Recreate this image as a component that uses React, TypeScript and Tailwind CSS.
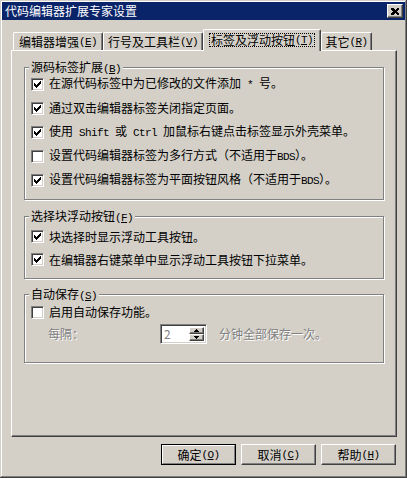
import React from 'react';

const raised =
  'border border-t-white border-l-white border-r-[#404040] border-b-[#404040] shadow-[inset_-1px_-1px_0_#808080]';
const sunken =
  'border border-t-[#808080] border-l-[#808080] border-r-white border-b-white shadow-[inset_1px_1px_0_#404040,inset_-1px_-1px_0_#d4d0c8]';
const disabled = 'text-[#808080] [text-shadow:1px_1px_0_#fff]';

function A({ children }: { children: React.ReactNode }) {
  return <span className="font-['Liberation_Mono',monospace] text-[11px] tracking-[-0.6px]">{children}</span>;
}

function Key({ k }: { k: string }) {
  return (
    <A>
      (<span className="underline underline-offset-[1px]">{k}</span>)
    </A>
  );
}

function CheckBox({ checked }: { checked?: boolean }) {
  return (
    <span className={`flex items-center justify-center w-[13px] h-[13px] shrink-0 bg-white ${sunken}`}>
      {checked && (
        <svg width="7" height="7" viewBox="0 0 7 7" shapeRendering="crispEdges">
          <rect x="0" y="2" width="1" height="3" fill="#000" />
          <rect x="1" y="3" width="1" height="3" fill="#000" />
          <rect x="2" y="4" width="1" height="3" fill="#000" />
          <rect x="3" y="3" width="1" height="3" fill="#000" />
          <rect x="4" y="2" width="1" height="3" fill="#000" />
          <rect x="5" y="1" width="1" height="3" fill="#000" />
          <rect x="6" y="0" width="1" height="3" fill="#000" />
        </svg>
      )}
    </span>
  );
}

function Row({ checked, h, children }: { checked?: boolean; h: string; children: React.ReactNode }) {
  return (
    <div className={`flex items-center gap-[5px] ${h}`}>
      <CheckBox checked={checked} />
      <span className="leading-[12px] whitespace-nowrap">{children}</span>
    </div>
  );
}

function Group({ label, className, children }: { label: React.ReactNode; className: string; children: React.ReactNode }) {
  return (
    <div className={`relative w-[360px] border border-[#808080] shadow-[inset_1px_1px_0_#fff,1px_1px_0_#fff] pl-[6px] ${className}`}>
      <div className="absolute left-[4px] top-[-7px] bg-[#d4d0c8] px-[2px] leading-[12px] whitespace-nowrap">{label}</div>
      {children}
    </div>
  );
}

function Tab({ w, children, selected }: { w: string; children: React.ReactNode; selected?: boolean }) {
  if (selected) {
    return (
      <div className={`relative z-10 ${w} h-[22px] mb-[-1px] bg-[#d4d0c8] rounded-t-[2px] border-t border-l border-r border-t-white border-l-white border-r-[#404040] shadow-[inset_-1px_0_0_#808080] flex justify-center pt-[3px]`}>
        <span className="h-[14px] px-[1px] border border-dotted border-black flex items-center leading-[12px] whitespace-nowrap">
          {children}
        </span>
      </div>
    );
  }
  return (
    <div className={`${w} h-[18px] rounded-t-[2px] border-t border-l border-r border-t-white border-l-white border-r-[#404040] shadow-[inset_-1px_0_0_#808080] flex items-center justify-center leading-[12px] whitespace-nowrap`}>
      {children}
    </div>
  );
}

function Button({ children, def }: { children: React.ReactNode; def?: boolean }) {
  if (def) {
    return (
      <div className="w-[75px] h-[21px] border border-black">
        <div className="h-full flex items-center justify-center leading-[12px] border border-t-white border-l-white border-r-[#808080] border-b-[#808080]">
          {children}
        </div>
      </div>
    );
  }
  return (
    <div className={`w-[75px] h-[21px] flex items-center justify-center leading-[12px] ${raised}`}>{children}</div>
  );
}

export default function App() {
  return (
    <div className="w-[407px] h-[478px] p-[2px] bg-[#d4d0c8] text-[12px] text-black font-['Noto_Sans_CJK_SC',sans-serif] shadow-[inset_-1px_-1px_0_#404040,inset_1px_1px_0_#d4d0c8,inset_-2px_-2px_0_#808080,inset_2px_2px_0_#fff]">
      <div className="h-[18px] bg-[#0a246a] flex items-center justify-between pl-[3px] pr-[2px]">
        <span className="text-white leading-[12px]">代码编辑器扩展专家设置</span>
        <div className={`w-[16px] h-[14px] bg-[#d4d0c8] flex items-center justify-center ${raised}`}>
          <svg width="8" height="7" viewBox="0 0 8 7" shapeRendering="crispEdges">
            <path d="M0 0h2l2 2l2-2h2v1l-2 2.5l2 2.5v1h-2l-2-2l-2 2h-2v-1l2-2.5l-2-2.5z" fill="#000" />
          </svg>
        </div>
      </div>

      <div className="flex items-end h-[21px] mt-[9px] ml-[11px]">
        <Tab w="w-[90px]">
          编辑器增强<Key k="E" />
        </Tab>
        <Tab w="w-[100px]">
          行号及工具栏<Key k="V" />
        </Tab>
        <Tab w="w-[118px]" selected>
          标签及浮动按钮<Key k="T" />
        </Tab>
        <Tab w="w-[51px]">
          其它<Key k="R" />
        </Tab>
      </div>

      <div className={`ml-[9px] w-[386px] h-[387px] pl-[12px] pt-[16px] ${raised}`}>
        <Group label={<>源码标签扩展<Key k="B" /></>} className="pt-[4px] pb-[7px]">
          <Row checked h="h-[24px]">
            在源代码标签中为已修改的文件添加<A> * </A>号。
          </Row>
          <Row checked h="h-[24px]">通过双击编辑器标签关闭指定页面。</Row>
          <Row checked h="h-[24px]">
            使用<A> Shift </A>或<A> Ctrl </A>加鼠标右键点击标签显示外壳菜单。
          </Row>
          <Row h="h-[24px]">
            设置代码编辑器标签为多行方式（不适用于<A>BDS</A>）。
          </Row>
          <Row checked h="h-[24px]">
            设置代码编辑器标签为平面按钮风格（不适用于<A>BDS</A>）。
          </Row>
        </Group>

        <Group label={<>选择块浮动按钮<Key k="F" /></>} className="mt-[16px] pt-[8px] pb-[7px]">
          <Row checked h="h-[23px]">块选择时显示浮动工具按钮。</Row>
          <Row checked h="h-[23px]">在编辑器右键菜单中显示浮动工具按钮下拉菜单。</Row>
        </Group>

        <Group label={<>自动保存<Key k="S" /></>} className="mt-[15px] pt-[6px] pb-[17px]">
          <Row h="h-[22px]">启用自动保存功能。</Row>
          <div className="flex items-center h-[22px] pl-[17px]">
            <span className={`w-[112px] leading-[12px] ${disabled}`}>每隔：</span>
            <div className={`w-[47px] h-[20px] bg-white flex items-stretch p-[2px] ${sunken}`}>
              <span className={`flex-1 flex items-center pl-[1px] leading-[12px] ${disabled}`}>2</span>
              <div className="w-[15px] flex flex-col">
                <div className={`flex-1 bg-[#d4d0c8] flex items-center justify-center ${raised}`}>
                  <svg width="5" height="3" viewBox="0 0 5 3" shapeRendering="crispEdges">
                    <path d="M2 0h1v1h1v1h1v1h-5v-1h1v-1h1z" fill="#000" />
                  </svg>
                </div>
                <div className={`flex-1 bg-[#d4d0c8] flex items-center justify-center ${raised}`}>
                  <svg width="5" height="3" viewBox="0 0 5 3" shapeRendering="crispEdges">
                    <path d="M0 0h5v1h-1v1h-1v1h-1v-1h-1v-1h-1z" fill="#000" />
                  </svg>
                </div>
              </div>
            </div>
            <span className={`ml-[12px] leading-[12px] ${disabled}`}>分钟全部保存一次。</span>
          </div>
        </Group>
      </div>

      <div className="flex gap-[5px] mt-[7px] ml-[159px]">
        <Button def>
          确定<Key k="O" />
        </Button>
        <Button>
          取消<Key k="C" />
        </Button>
        <Button>
          帮助<Key k="H" />
        </Button>
      </div>
    </div>
  );
}
